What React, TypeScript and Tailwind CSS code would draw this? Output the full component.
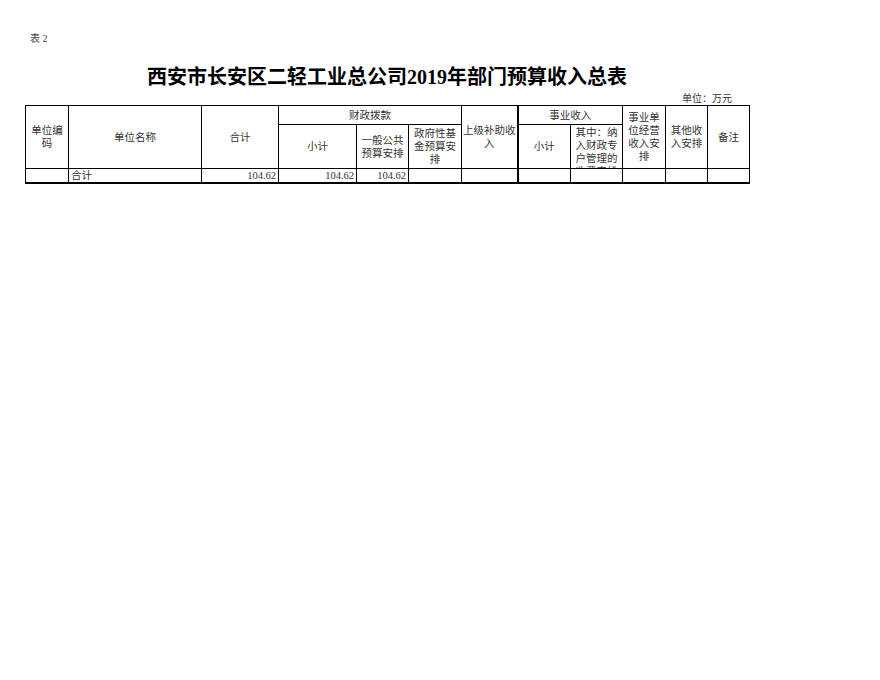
import React from "react";

const cell = "border border-black p-0 text-center align-middle";

export default function App() {
  return (
    <div className="w-[880px] h-[680px] bg-white font-['Liberation_Serif','Noto_Sans_CJK_SC',serif] text-[#333]">
      <div className="pt-[32px] pl-[30px] text-[10px] leading-[14px] text-[#444]">表 2</div>

      <div className="ml-[25px] w-[724px]">
        <h1 className="mt-[18px] text-center text-[20px] leading-[26px] font-bold text-black">
          西安市长安区二轻工业总公司2019年部门预算收入总表
        </h1>
        <div className="mt-[3px] pr-[17px] text-right text-[10px] leading-[12px]">单位：万元</div>

        <table className="w-[725px] table-fixed border-collapse text-[10.5px] leading-[13px]">
          <colgroup>
            <col className="w-[43px]" />
            <col className="w-[133px]" />
            <col className="w-[77px]" />
            <col className="w-[78px]" />
            <col className="w-[52px]" />
            <col className="w-[53px]" />
            <col className="w-[56px]" />
            <col className="w-[53px]" />
            <col className="w-[52px]" />
            <col className="w-[43px]" />
            <col className="w-[42px]" />
            <col className="w-[42px]" />
          </colgroup>
          <tbody>
            <tr className="h-[19px]">
              <td rowSpan={2} className={cell}>单位编<br />码</td>
              <td rowSpan={2} className={cell}>单位名称</td>
              <td rowSpan={2} className={cell}>合计</td>
              <td colSpan={3} className={cell}>财政拨款</td>
              <td rowSpan={2} className={cell}>上级补助收<br />入</td>
              <td colSpan={2} className={`${cell} border-l-2`}>事业收入</td>
              <td rowSpan={2} className={cell}>事业单<br />位经营<br />收入安<br />排</td>
              <td rowSpan={2} className={cell}>其他收<br />入安排</td>
              <td rowSpan={2} className={cell}>备注</td>
            </tr>
            <tr className="h-[44px]">
              <td className={cell}>小计</td>
              <td className={cell}>一般公共<br />预算安排</td>
              <td className={cell}>政府性基<br />金预算安<br />排</td>
              <td className={`${cell} border-l-2`}>小计</td>
              <td className={`${cell} align-top`}>
                <div className="h-[43px] overflow-hidden pt-[1px]">
                  其中：纳<br />入财政专<br />户管理的<br />收费安排
                </div>
              </td>
            </tr>
            <tr className="h-[14px] leading-[13px]">
              <td className={`${cell} border-b-2`}></td>
              <td className={`${cell} border-b-2 text-left pl-[2px]`}>合计</td>
              <td className={`${cell} border-b-2 text-right pr-[2px]`}>104.62</td>
              <td className={`${cell} border-b-2 text-right pr-[2px]`}>104.62</td>
              <td className={`${cell} border-b-2 text-right pr-[2px]`}>104.62</td>
              <td className={`${cell} border-b-2`}></td>
              <td className={`${cell} border-b-2`}></td>
              <td className={`${cell} border-b-2 border-l-2`}></td>
              <td className={`${cell} border-b-2`}></td>
              <td className={`${cell} border-b-2`}></td>
              <td className={`${cell} border-b-2`}></td>
              <td className={`${cell} border-b-2`}></td>
            </tr>
          </tbody>
        </table>
      </div>
    </div>
  );
}
